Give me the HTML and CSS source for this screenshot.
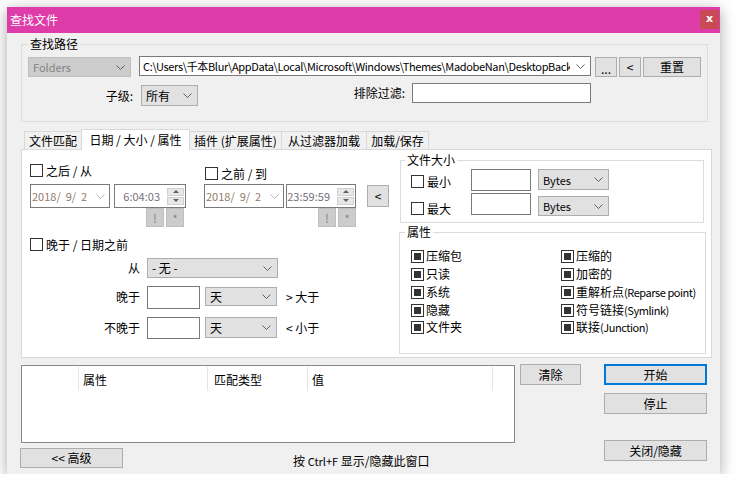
FILE: index.html
```html
<!DOCTYPE html>
<html lang="zh-CN">
<head>
<meta charset="utf-8">
<title>查找文件</title>
<link rel="stylesheet" href="styles.css">
</head>
<body>
<div class="window">
  <div class="titlebar">
    <span class="title">查找文件</span>
    <span class="close">x</span>
  </div>

  <fieldset class="grp path-grp">
    <legend>查找路径</legend>
    <div class="r1">
      <div class="combo disabled folders"><span class="lat">Folders</span><svg class="chev" width="9" height="5" viewBox="0 0 9 5"><path d="M0.5 0.5 L4.5 4.5 L8.5 0.5"/></svg></div>
      <div class="combo white path"><span class="clip lat">C:\Users\千本Blur\AppData\Local\Microsoft\Windows\Themes\MadobeNan\DesktopBackground</span><svg class="chev" width="9" height="5" viewBox="0 0 9 5"><path d="M0.5 0.5 L4.5 4.5 L8.5 0.5"/></svg></div>
      <div class="btn b-dots">...</div>
      <div class="btn b-lt">&lt;</div>
      <div class="btn b-reset">重置</div>
    </div>
    <div class="r2">
      <span class="lbl l-sub">子级:</span>
      <div class="combo gray sub"><span>所有</span><svg class="chev" width="9" height="5" viewBox="0 0 9 5"><path d="M0.5 0.5 L4.5 4.5 L8.5 0.5"/></svg></div>
      <span class="lbl l-excl">排除过滤:</span>
      <div class="input excl"></div>
    </div>
  </fieldset>

  <div class="tabs">
    <div class="tab t1">文件匹配</div>
    <div class="tab active t2">日期 / 大小 / 属性</div>
    <div class="tab t3">插件 (扩展属性)</div>
    <div class="tab t4">从过滤器加载</div>
    <div class="tab t5">加载/保存</div>
  </div>

  <div class="panel">
    <div class="left">
      <div class="dates">
        <div class="dcol after">
          <div class="chk"><span class="cb"></span><span class="ct">之后 / 从</span></div>
          <div class="drow">
            <div class="dbox d1"><span class="dtext lat">2018/  9/  2</span><svg class="chev light" width="9" height="5" viewBox="0 0 9 5"><path d="M0.5 0.5 L4.5 4.5 L8.5 0.5"/></svg></div>
            <div class="tbox t-a"><span class="ttext lat">6:04:03</span><span class="spin"><span class="up"></span><span class="down"></span></span></div>
          </div>
          <div class="xrow pr2"><div class="xbtn">!</div><div class="xbtn star">*</div></div>
        </div>
        <div class="dcol before">
          <div class="chk"><span class="cb"></span><span class="ct">之前 / 到</span></div>
          <div class="drow">
            <div class="dbox d2"><span class="dtext lat">2018/  9/  2</span><svg class="chev light" width="9" height="5" viewBox="0 0 9 5"><path d="M0.5 0.5 L4.5 4.5 L8.5 0.5"/></svg></div>
            <div class="tbox t-b"><span class="ttext lat">23:59:59</span><span class="spin"><span class="up"></span><span class="down"></span></span></div>
          </div>
          <div class="xrow"><div class="xbtn">!</div><div class="xbtn star">*</div></div>
        </div>
        <div class="btn b-swap">&lt;</div>
      </div>

      <div class="chk later"><span class="cb"></span><span class="ct">晚于 / 日期之前</span></div>

      <div class="frow f1">
        <span class="flbl">从</span>
        <div class="combo gray from"><span>- 无 -</span><svg class="chev" width="9" height="5" viewBox="0 0 9 5"><path d="M0.5 0.5 L4.5 4.5 L8.5 0.5"/></svg></div>
      </div>
      <div class="frow f2">
        <span class="flbl">晚于</span>
        <div class="input num n1"></div>
        <div class="combo gray unit u1"><span>天</span><svg class="chev" width="9" height="5" viewBox="0 0 9 5"><path d="M0.5 0.5 L4.5 4.5 L8.5 0.5"/></svg></div>
        <span class="cmp">&gt; 大于</span>
      </div>
      <div class="frow f3">
        <span class="flbl">不晚于</span>
        <div class="input num n2"></div>
        <div class="combo gray unit u2"><span>天</span><svg class="chev" width="9" height="5" viewBox="0 0 9 5"><path d="M0.5 0.5 L4.5 4.5 L8.5 0.5"/></svg></div>
        <span class="cmp">&lt; 小于</span>
      </div>
    </div>

    <div class="right">
      <fieldset class="grp size-grp">
        <legend>文件大小</legend>
        <div class="srow s1">
          <div class="chk schk"><span class="cb"></span><span class="ct">最小</span></div>
          <div class="input sinput"></div>
          <div class="combo gray bytes"><span class="lat">Bytes</span><svg class="chev" width="9" height="5" viewBox="0 0 9 5"><path d="M0.5 0.5 L4.5 4.5 L8.5 0.5"/></svg></div>
        </div>
        <div class="srow s2">
          <div class="chk schk"><span class="cb"></span><span class="ct">最大</span></div>
          <div class="input sinput"></div>
          <div class="combo gray bytes"><span class="lat">Bytes</span><svg class="chev" width="9" height="5" viewBox="0 0 9 5"><path d="M0.5 0.5 L4.5 4.5 L8.5 0.5"/></svg></div>
        </div>
      </fieldset>

      <fieldset class="grp attr-grp">
        <legend>属性</legend>
        <div class="agrid">
          <div class="aitem"><span class="cbi"></span><span class="at">压缩包</span></div>
          <div class="aitem"><span class="cbi"></span><span class="at">压缩的</span></div>
          <div class="aitem"><span class="cbi"></span><span class="at">只读</span></div>
          <div class="aitem"><span class="cbi"></span><span class="at">加密的</span></div>
          <div class="aitem"><span class="cbi"></span><span class="at">系统</span></div>
          <div class="aitem"><span class="cbi"></span><span class="at">重解析点<span class="lat">(Reparse point)</span></span></div>
          <div class="aitem"><span class="cbi"></span><span class="at">隐藏</span></div>
          <div class="aitem"><span class="cbi"></span><span class="at">符号链接<span class="lat">(Symlink)</span></span></div>
          <div class="aitem"><span class="cbi"></span><span class="at">文件夹</span></div>
          <div class="aitem"><span class="cbi"></span><span class="at">联接<span class="lat">(Junction)</span></span></div>
        </div>
      </fieldset>
    </div>
  </div>

  <div class="bottom">
    <div class="lcol">
      <div class="list">
        <div class="lhead">
          <div class="hc c1"></div>
          <div class="hc c2">属性</div>
          <div class="hc c3">匹配类型</div>
          <div class="hc c4">值</div>
        </div>
      </div>
      <div class="bbar">
        <div class="btn b-adv">&lt;&lt; 高级</div>
        <span class="hint">按 <span class="lat">Ctrl+F</span> 显示/隐藏此窗口</span>
      </div>
    </div>
    <div class="btn b-clear">清除</div>
    <div class="rcol">
      <div class="btn b-start">开始</div>
      <div class="btn b-stop">停止</div>
      <div class="btn b-close">关闭/隐藏</div>
    </div>
  </div>
</div>
</body>
</html>
```

FILE: styles.css
```css
* { box-sizing: border-box; }
html, body { margin: 0; padding: 0; background: #fff; }
body {
  font-family: "Noto Sans CJK SC", "Noto Sans", sans-serif;
  font-size: 12px;
  color: #000;
  line-height: 16px;
}
.lat { font-size: 11px; }

.window {
  margin: 7px 0 0 7px;
  width: 713px;
  height: 467px;
  background: #f0f0f0;
  box-shadow: 0 3px 14px rgba(0, 0, 0, 0.35);
  display: flex;
  flex-direction: column;
}

/* title bar */
.titlebar {
  height: 26px;
  flex: none;
  background: #de3ca9;
  display: flex;
  align-items: flex-start;
  justify-content: space-between;
}
.title { color: #fff; margin: 5px 0 0 3px; line-height: 16px; }
.close {
  width: 19px;
  height: 19px;
  margin: 3px 1px 0 0;
  background: #c84a55;
  color: #fff;
  font: bold 11px/17px "DejaVu Sans", sans-serif;
  text-align: center;
}

/* group boxes */
.grp {
  margin: 0;
  padding: 0;
  border: 1px solid #dcdcdc;
  min-width: 0;
  flex: none;
}
.grp legend { padding: 0 2px; line-height: 16px; }

.path-grp { margin: 3px 0 0 14px; width: 687px; height: 86px; }
.path-grp legend { margin-left: 6px; }

/* generic controls */
.combo, .input, .btn, .dbox, .tbox, .xbtn {
  display: flex;
  align-items: center;
  flex: none;
  white-space: nowrap;
}
.combo { justify-content: space-between; padding: 0 5px 0 4px; }
.combo.gray { background: #e1e1e1; border: 1px solid #adadad; }
.combo.white { background: #fff; border: 1px solid #7a7a7a; padding-left: 3px; }
.combo.disabled { background: #cccccc; border: 1px solid #bfbfbf; color: #838383; }
.chev { flex: none; }
.chev path { fill: none; stroke: #5f5f5f; stroke-width: 1; }
.chev.light path { stroke: #b8b8b8; }
.input { background: #fff; border: 1px solid #7a7a7a; }
.btn {
  justify-content: center;
  background: #e1e1e1;
  border: 1px solid #adadad;
}
.clip { overflow: hidden; white-space: nowrap; flex: 1; margin-right: 6px; letter-spacing: -0.35px; }

/* path row 1 */
.r1 { display: flex; align-items: flex-start; margin: 4px 0 0 6px; }
.folders { width: 103px; height: 20px; margin-top: 1px; }
.path { width: 452px; height: 20px; margin-left: 8px; }
.b-dots { width: 22px; height: 20px; margin: 1px 0 0 4px; padding-top: 4px; line-height: 12px; }
.b-lt { width: 22px; height: 20px; margin: 1px 0 0 2px; }
.b-reset { width: 58px; height: 20px; margin: 1px 0 0 2px; }

/* path row 2 */
.r2 { display: flex; align-items: flex-start; margin-top: 6px; }
.lbl { flex: none; text-align: right; }
.l-sub { width: 111px; line-height: 21px; margin-top: 2px; }
.sub { width: 57px; height: 21px; margin: 2px 0 0 8px; }
.l-excl { width: 207px; line-height: 20px; }
.excl { width: 179px; height: 20px; margin-left: 7px; }

/* tabs */
.tabs {
  display: flex;
  align-items: flex-end;
  height: 20px;
  margin: 7px 0 0 17px;
  flex: none;
}
.tab {
  height: 18px;
  border: 1px solid #d9d9d9;
  border-bottom: none;
  background: #f0f0f0;
  text-align: center;
  line-height: 17px;
  margin-left: -1px;
  white-space: nowrap;
  flex: none;
}
.t1 { width: 58px; margin-left: 0; }
.t2 { width: 109px; }
.t3 { width: 93px; }
.t4 { width: 86px; }
.t5 { width: 63px; }
.tab.active {
  height: 21px;
  margin-bottom: -1px;
  background: #fff;
  position: relative;
  z-index: 1;
  line-height: 19px;
}

/* panel */
.panel {
  margin-left: 14px;
  width: 691px;
  height: 209px;
  border: 1px solid #d9d9d9;
  background: #fff;
  display: flex;
  flex: none;
}
.left { width: 378px; flex: none; }

.chk { display: flex; align-items: center; height: 13px; line-height: 13px; white-space: nowrap; }
.cb {
  width: 13px;
  height: 13px;
  flex: none;
  border: 1px solid #333;
  background: #fff;
}
.ct { margin-left: 3px; }

.dates { display: flex; margin: 14px 0 0 8px; }
.dcol { display: flex; flex-direction: column; flex: none; }
.before { margin-left: 18px; }
.before .chk { margin: 3px 0 0 1px; }
.drow { display: flex; margin-top: 7px; }
.before .drow { margin-top: 4px; }
.dbox {
  height: 24px;
  width: 80px;
  border: 1px solid #7a7a7a;
  background: #fff;
  justify-content: space-between;
  padding: 0 4px 0 1px;
  color: #927a68;
}
.dtext { white-space: pre; }
.tbox {
  height: 24px;
  border: 1px solid #7a7a7a;
  background: #fff;
  justify-content: flex-end;
  color: #75707a;
  padding-right: 1px;
}
.t-a { width: 72px; margin-left: 4px; }
.t-b { width: 70px; margin-left: 2px; }
.spin {
  display: flex;
  flex-direction: column;
  width: 17px;
  height: 17px;
  margin-left: 7px;
  flex: none;
}
.spin .up, .spin .down {
  height: 8px;
  background: #e8e8e8;
  border: 1px solid #d0d0d0;
  display: flex;
  align-items: center;
  justify-content: center;
}
.spin .down { margin-top: 1px; }
.spin .up::after {
  content: "";
  border-left: 3px solid transparent;
  border-right: 3px solid transparent;
  border-bottom: 3px solid #606060;
}
.spin .down::after {
  content: "";
  border-left: 3px solid transparent;
  border-right: 3px solid transparent;
  border-top: 3px solid #606060;
}
.xrow { display: flex; justify-content: flex-end; }
.pr2 { padding-right: 2px; }
.xbtn {
  width: 18px;
  height: 19px;
  justify-content: center;
  background: #cccccc;
  border: 1px solid #bfbfbf;
  color: #838383;
  margin-left: 2px;
}
.xbtn.star { font-size: 11px; align-items: flex-start; padding-top: 1px; }
.b-swap { width: 22px; height: 22px; margin: 21px 0 0 11px; }

.later { margin: 11px 0 0 8px; }

.frow { display: flex; align-items: flex-start; }
.flbl { width: 118px; flex: none; text-align: right; white-space: nowrap; }
.f1 { margin-top: 7px; }
.f1 .flbl { line-height: 20px; }
.from { width: 131px; height: 20px; margin-left: 7px; }
.f2 { margin-top: 8px; }
.f3 { margin-top: 8px; }
.f2 .flbl, .f3 .flbl { line-height: 22px; }
.num { width: 53px; margin-left: 7px; }
.n1 { height: 23px; }
.n2 { height: 22px; }
.unit { width: 72px; margin-left: 5px; }
.u1 { height: 19px; margin-top: 1px; }
.u2 { height: 21px; }
.cmp { margin-left: 9px; line-height: 21px; white-space: nowrap; }

/* right side */
.right { display: flex; flex-direction: column; flex: none; }
.right .grp legend { line-height: 14px; }
.size-grp { margin-top: 3px; width: 304px; height: 70px; }
.size-grp legend { margin-left: 4px; }
.srow { display: flex; align-items: flex-start; margin-left: 10px; }
.s1 { margin-top: 2px; }
.s2 { margin-top: 2px; }
.schk { width: 60px; flex: none; }
.s1 .schk { margin-top: 6px; }
.s2 .schk { margin-top: 9px; }
.sinput { width: 60px; height: 22px; }
.bytes { width: 71px; margin-left: 7px; }
.s1 .bytes { height: 21px; }
.s2 .bytes { height: 20px; margin-top: 3px; }

.attr-grp { margin: 2px 0 0 -1px; width: 307px; height: 129px; }
.attr-grp legend { margin-left: 5px; }
.agrid {
  display: grid;
  grid-template-columns: 150px 135px;
  grid-template-rows: 18px 18px 18px 18px 16px;
  margin: 8px 0 0 11px;
}
.aitem { display: flex; align-items: center; white-space: nowrap; overflow: hidden; }
.aitem .lat { letter-spacing: -0.45px; }
.cbi {
  width: 13px;
  height: 13px;
  flex: none;
  border: 1px solid #333;
  padding: 2px;
  background: #fff;
}
.cbi::after { content: ""; display: block; width: 7px; height: 7px; background: #333; }
.at { margin-left: 2px; }

/* bottom */
.bottom { display: flex; align-items: flex-start; flex: none; }
.lcol { margin-left: 14px; width: 494px; flex: none; }
.list {
  margin-top: 7px;
  height: 78px;
  border: 1px solid #828790;
  background: #fff;
}
.lhead { display: flex; height: 25px; }
.hc {
  flex: none;
  border-right: 1px solid #e5e5e5;
  padding-left: 4px;
  line-height: 25px;
  margin-top: 1px;
  height: 24px;
}
.c1 { width: 57px; }
.c2 { width: 129px; }
.c3 { width: 100px; padding-left: 6px; }
.c4 { width: 185px; }
.bbar { display: flex; align-items: flex-start; margin-top: 5px; }
.b-adv { width: 103px; height: 20px; margin-left: -1px; }
.hint { margin: 6px 0 0 170px; line-height: 14px; white-space: nowrap; }
.b-clear { width: 61px; height: 21px; margin: 6px 0 0 5px; }
.rcol { margin-left: 23px; width: 103px; display: flex; flex-direction: column; flex: none; }
.b-start { height: 21px; margin-top: 6px; border: 2px solid #0078d7; }
.b-stop { height: 21px; margin-top: 8px; }
.b-close { height: 21px; margin-top: 26px; }
```
